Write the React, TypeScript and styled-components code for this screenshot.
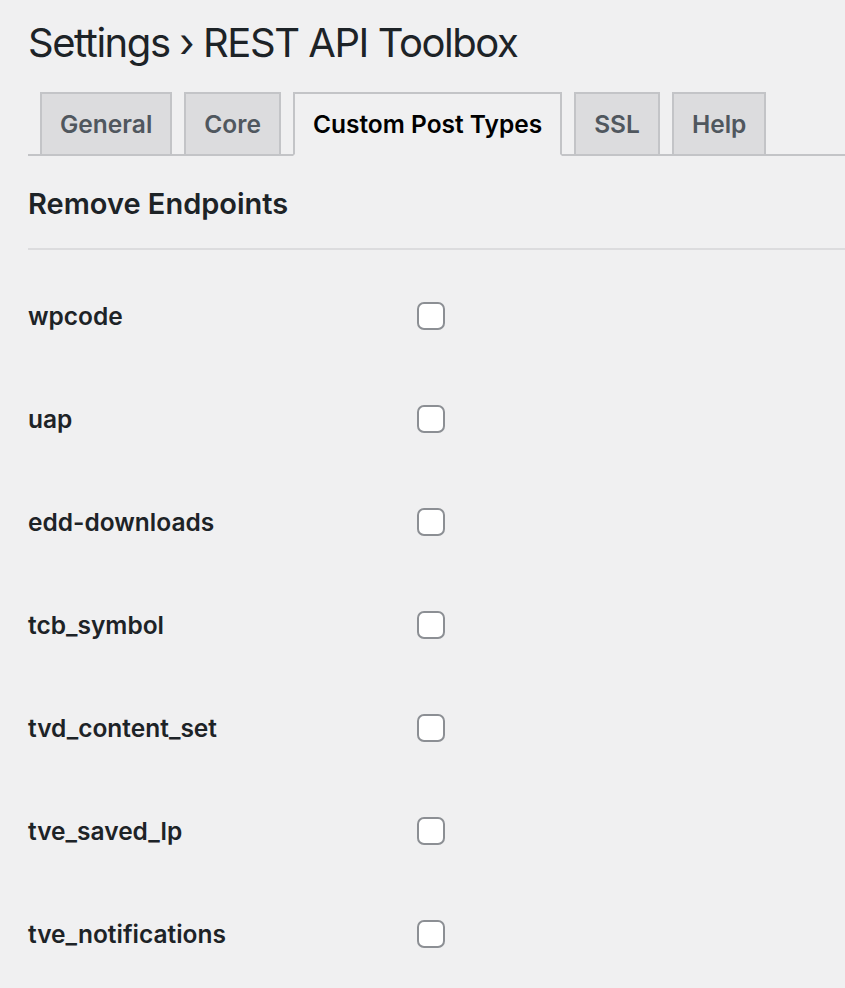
import React from 'react';
import styled, { createGlobalStyle } from 'styled-components';

const GlobalStyle = createGlobalStyle`
  html, body {
    margin: 0;
    padding: 0;
    background: #f0f0f1;
  }
  body {
    font-family: Inter, "Noto Sans", "Liberation Sans", sans-serif;
    color: #1d2327;
  }
`;

interface Tab {
  label: string;
  active?: boolean;
}

const tabs: Tab[] = [
  { label: 'General' },
  { label: 'Core' },
  { label: 'Custom Post Types', active: true },
  { label: 'SSL' },
  { label: 'Help' },
];

const postTypes = [
  'wpcode',
  'uap',
  'edd-downloads',
  'tcb_symbol',
  'tvd_content_set',
  'tve_saved_lp',
  'tve_notifications',
];

const App: React.FC = () => (
  <>
    <GlobalStyle />
    <Wrap>
      <Title>Settings › REST API Toolbox</Title>
      <NavTabs>
        {tabs.map((tab) => (
          <NavTab key={tab.label} active={tab.active}>
            {tab.label}
          </NavTab>
        ))}
      </NavTabs>
      <SectionTitle>Remove Endpoints</SectionTitle>
      <Divider />
      <FormTable>
        {postTypes.map((name) => (
          <Row key={name}>
            <RowLabel>{name}</RowLabel>
            <RowField>
              <Checkbox type="checkbox" aria-label={name} />
            </RowField>
          </Row>
        ))}
      </FormTable>
    </Wrap>
  </>
);

const Wrap = styled.div`
  padding: 0 0 0 28px;
`;

const Title = styled.h1`
  margin: 0;
  padding: 17px 0 0;
  font-size: 40px;
  font-weight: 400;
  line-height: 52px;
  color: #1d2327;
  letter-spacing: -1.45px;
`;

const NavTabs = styled.nav`
  display: flex;
  align-items: flex-end;
  margin-top: 23px;
  border-bottom: 2px solid #c3c4c7;
`;

const NavTab = styled.div<{ active?: boolean }>`
  margin-left: 12px;
  margin-bottom: -2px;
  padding: 9px 18px;
  font-size: 24.5px;
  font-weight: 600;
  line-height: 42px;
  border: 2px solid #c3c4c7;
  border-bottom-color: ${({ active }) => (active ? '#f0f0f1' : '#c3c4c7')};
  background: ${({ active }) => (active ? '#f0f0f1' : '#dcdcde')};
  color: ${({ active }) => (active ? '#000' : '#50575e')};
  white-space: nowrap;
`;

const SectionTitle = styled.h2`
  margin: 0;
  padding: 28px 0 0;
  font-size: 29px;
  font-weight: 600;
  line-height: 40px;
  color: #1d2327;
`;

const Divider = styled.hr`
  margin: 24px 0 0;
  border: 0;
  border-top: 2px solid #dcdcde;
`;

const FormTable = styled.div`
  display: flex;
  flex-direction: column;
  padding-top: 14px;
`;

const Row = styled.div`
  display: flex;
  align-items: center;
  height: 103px;
`;

const RowLabel = styled.div`
  width: 389px;
  font-size: 24.5px;
  font-weight: 600;
  line-height: 32px;
  color: #1d2327;
`;

const RowField = styled.div`
  display: flex;
  align-items: center;
`;

const Checkbox = styled.input`
  appearance: none;
  -webkit-appearance: none;
  margin: 0;
  width: 28px;
  height: 28px;
  border: 2px solid #8c8f94;
  border-radius: 7px;
  background: #fff;
  box-sizing: border-box;
`;

export default App;
